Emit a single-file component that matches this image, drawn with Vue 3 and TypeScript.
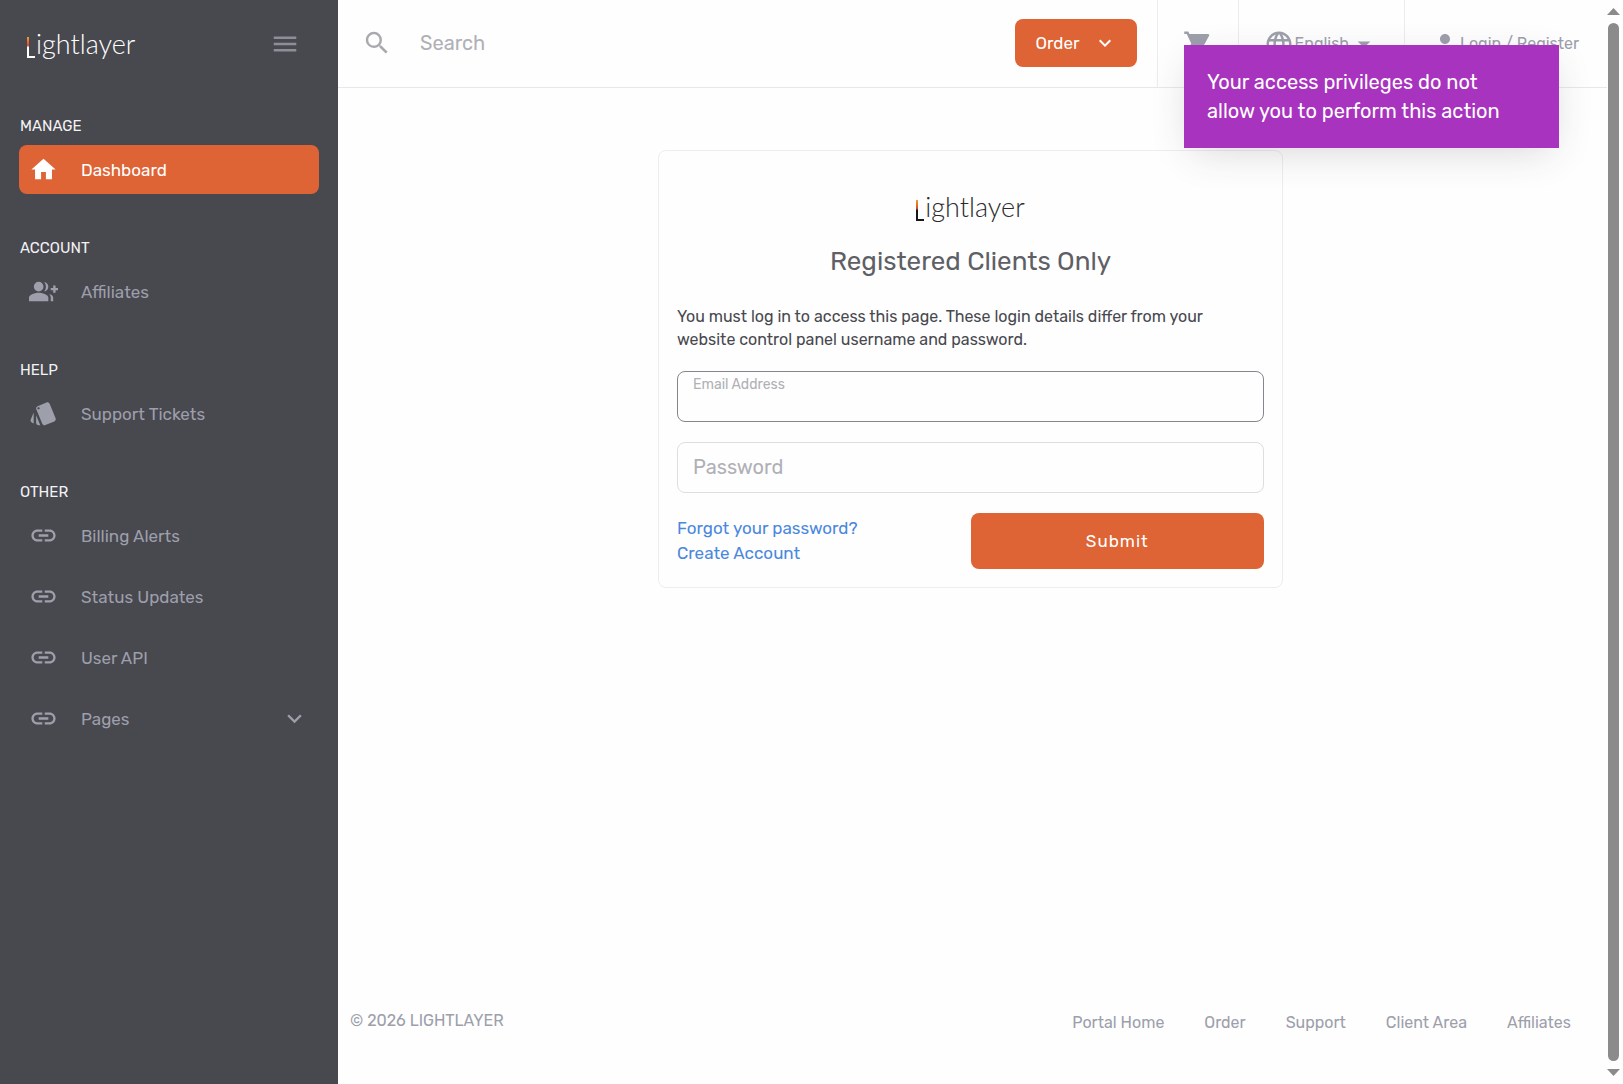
<script setup lang="ts">
import { ref } from 'vue'

interface NavItem {
  label: string
  icon: string
  active?: boolean
  expandable?: boolean
}

interface NavSection {
  title: string
  items: NavItem[]
}

const icons: Record<string, string> = {
  home: 'M10 20v-6h4v6h5v-8h3L12 3 2 12h3v8z',
  groupAdd:
    'M22 9V7h-2v2h-2v2h2v2h2v-2h2V9zM8 4a4 4 0 1 0 0 8 4 4 0 0 0 0-8zM8 13c-2.670 0-8 1.340-8 4v3h16v-3c0-2.660-5.330-4-8-4zM12.510 4.050C13.430 5.110 14 6.490 14 8s-.57 2.890-1.490 3.950C14.470 11.700 16 10.040 16 8s-1.530-3.700-3.490-3.950zM16.530 13.830C17.420 14.660 18 15.700 18 17v3h2v-3c0-1.450-1.590-2.510-3.470-3.170z',
  style:
    'M2.53 19.65l1.34.56v-9.03l-2.43 5.86c-.41 1.02.08 2.19 1.09 2.61zm19.5-3.7L17.07 3.98c-.31-.75-1.04-1.21-1.81-1.23-.26 0-.53.04-.79.15L7.1 5.95c-.75.31-1.21 1.03-1.23 1.8-.01.27.04.54.15.8l4.96 11.97c.31.76 1.05 1.22 1.83 1.23.26 0 .52-.05.77-.15l7.36-3.05c1.02-.42 1.51-1.59 1.09-2.6zM7.88 8.75c-.55 0-1-.45-1-1s.45-1 1-1 1 .45 1 1-.45 1-1 1zm-2 11c0 1.1.9 2 2 2h1.45l-3.45-8.34v6.34z',
  link: 'M3.900 12c0-1.710 1.390-3.100 3.100-3.100h4V7H7c-2.760 0-5 2.240-5 5s2.240 5 5 5h4v-1.900H7c-1.710 0-3.100-1.390-3.100-3.100zM8 13h8v-2H8v2zm9-6h-4v1.900h4c1.710 0 3.100 1.390 3.100 3.100s-1.390 3.100-3.100 3.100h-4V17h4c2.760 0 5-2.240 5-5s-2.240-5-5-5z',
}

const sections: NavSection[] = [
  { title: 'MANAGE', items: [{ label: 'Dashboard', icon: 'home', active: true }] },
  { title: 'ACCOUNT', items: [{ label: 'Affiliates', icon: 'groupAdd' }] },
  { title: 'HELP', items: [{ label: 'Support Tickets', icon: 'style' }] },
  {
    title: 'OTHER',
    items: [
      { label: 'Billing Alerts', icon: 'link' },
      { label: 'Status Updates', icon: 'link' },
      { label: 'User API', icon: 'link' },
      { label: 'Pages', icon: 'link', expandable: true },
    ],
  },
]

const footerLinks = ['Portal Home', 'Order', 'Support', 'Client Area', 'Affiliates']

const search = ref('')
const email = ref('')
const password = ref('')
</script>

<template>
  <div class="app">
    <aside class="sidebar">
      <header class="sidebar-head">
        <a href="#" class="logo logo-light" aria-label="Lightlayer"><i class="mark"></i><span>ightlayer</span></a>
        <button type="button" class="bare menu" aria-label="Toggle menu">
          <svg class="icon" viewBox="0 0 24 24"><path d="M3 18h18v-2H3v2zm0-5h18v-2H3v2zm0-7v2h18V6H3z" /></svg>
        </button>
      </header>
      <nav>
        <section v-for="section in sections" :key="section.title" class="nav-section">
          <h2>{{ section.title }}</h2>
          <a v-for="item in section.items" :key="item.label" href="#" class="nav-item" :class="{ active: item.active }">
            <svg class="nav-icon" viewBox="0 0 24 24"><path :d="icons[item.icon]" /></svg>
            <span>{{ item.label }}</span>
            <svg v-if="item.expandable" class="nav-icon expand" viewBox="0 0 24 24">
              <path d="M16.590 8.590 12 13.170 7.410 8.590 6 10l6 6 6-6z" />
            </svg>
          </a>
        </section>
      </nav>
    </aside>

    <div class="page">
      <header class="topbar">
        <label class="search">
          <svg class="icon" viewBox="0 0 24 24">
            <path d="M15.500 14h-.79l-.28-.27A6.470 6.470 0 0 0 16 9.500 6.500 6.500 0 1 0 9.500 16c1.610 0 3.090-.59 4.230-1.570l.27.28v.79l5 4.990L20.490 19l-4.990-5zm-6 0C7.010 14 5 11.990 5 9.500S7.010 5 9.500 5 14 7.010 14 9.500 11.990 14 9.500 14z" />
          </svg>
          <input v-model="search" type="text" placeholder="Search" aria-label="Search" />
        </label>
        <div class="order-wrap">
          <button type="button" class="order">
            <span>Order</span>
            <svg viewBox="0 0 24 24"><path d="M16.590 8.590 12 13.170 7.410 8.590 6 10l6 6 6-6z" /></svg>
          </button>
        </div>
        <a href="#" class="cell" aria-label="Cart">
          <svg class="icon" viewBox="0 0 24 24">
            <path d="M7 18c-1.100 0-1.990.9-1.990 2S5.900 22 7 22s2-.9 2-2-.9-2-2-2zM1 2v2h2l3.600 7.590-1.350 2.450c-.16.28-.25.61-.25.96 0 1.100.9 2 2 2h12v-2H7.420c-.14 0-.25-.11-.25-.25l.03-.12.9-1.630h7.450c.75 0 1.410-.41 1.750-1.030l3.580-6.490A1 1 0 0 0 20 4H5.210l-.94-2H1zm16 16c-1.100 0-1.990.9-1.990 2s.89 2 1.990 2 2-.9 2-2-.9-2-2-2z" />
          </svg>
        </a>
        <button type="button" class="bare cell">
          <svg class="icon" viewBox="0 0 24 24">
            <path d="M11.990 2C6.470 2 2 6.480 2 12s4.470 10 9.990 10C17.520 22 22 17.520 22 12S17.520 2 11.990 2zm6.930 6h-2.950a15.650 15.650 0 0 0-1.380-3.560A8.030 8.030 0 0 1 18.920 8zM12 4.040c.83 1.200 1.480 2.530 1.910 3.960h-3.820c.43-1.430 1.080-2.760 1.910-3.960zM4.260 14C4.100 13.360 4 12.690 4 12s.1-1.360.26-2h3.380c-.08.66-.14 1.320-.14 2s.06 1.340.14 2H4.260zm.82 2h2.950c.32 1.250.78 2.450 1.380 3.560A7.990 7.990 0 0 1 5.080 16zm2.950-8H5.080a7.990 7.990 0 0 1 4.330-3.560A15.650 15.650 0 0 0 8.030 8zM12 19.960c-.83-1.200-1.480-2.530-1.910-3.960h3.820c-.43 1.430-1.080 2.760-1.910 3.960zM14.340 14H9.660c-.09-.66-.16-1.320-.16-2s.07-1.350.16-2h4.680c.09.65.16 1.320.16 2s-.07 1.340-.16 2zm.25 5.560c.6-1.110 1.060-2.310 1.380-3.560h2.950a8.030 8.030 0 0 1-4.330 3.560zM16.360 14c.08-.66.14-1.320.14-2s-.06-1.340-.14-2h3.380c.16.64.26 1.310.26 2s-.1 1.360-.26 2h-3.380z" />
          </svg>
          <span>English</span>
          <svg class="icon" viewBox="0 0 24 24"><path d="M7 10l5 5 5-5z" /></svg>
        </button>
        <a href="#" class="cell">
          <svg class="icon" viewBox="0 0 24 24">
            <path d="M12 12c2.210 0 4-1.790 4-4s-1.790-4-4-4-4 1.790-4 4 1.790 4 4 4zm0 2c-2.670 0-8 1.340-8 4v2h16v-2c0-2.660-5.330-4-8-4z" />
          </svg>
          <span>Login / Register</span>
        </a>
      </header>

      <main>
        <form class="card" @submit.prevent>
          <a href="#" class="logo logo-dark" aria-label="Lightlayer"><i class="mark"></i><span>ightlayer</span></a>
          <h1>Registered Clients Only</h1>
          <p>You must log in to access this page. These login details differ from your website control panel username and password.</p>
          <div class="field focused">
            <label for="email">Email Address</label>
            <input id="email" v-model="email" type="email" />
          </div>
          <div class="field">
            <label for="password">Password</label>
            <input id="password" v-model="password" type="password" />
          </div>
          <div class="actions">
            <div class="links">
              <a href="#">Forgot your password?</a>
              <a href="#">Create Account</a>
            </div>
            <button type="submit" class="submit">Submit</button>
          </div>
        </form>
      </main>

      <footer class="footer">
        <span>© 2026 LIGHTLAYER</span>
        <nav>
          <a v-for="link in footerLinks" :key="link" href="#">{{ link }}</a>
        </nav>
      </footer>
    </div>

    <div class="scrollbar" aria-hidden="true">
      <i class="arrow up"></i>
      <i class="thumb"></i>
      <i class="arrow down"></i>
    </div>

    <div class="toast" role="alert">Your access privileges do not allow you to perform this action</div>
  </div>
</template>

<style>
body {
  margin: 0;
  background: #fefefe;
}
</style>

<style scoped>
* {
  box-sizing: border-box;
}

.app {
  position: relative;
  display: flex;
  min-height: 100vh;
  font-family: Rubik, Roboto, 'Liberation Sans', sans-serif;
  font-size: 16px;
  color: #9d9fab;
}

a {
  color: inherit;
  text-decoration: none;
}

svg {
  display: block;
  flex: none;
  fill: currentColor;
}

button,
input {
  font: inherit;
  color: inherit;
}

.bare {
  padding: 0;
  border: 0;
  background: none;
}

.icon {
  width: 30px;
  height: 30px;
}

.logo {
  display: flex;
  font-family: Lato, sans-serif;
  font-weight: 300;
  font-size: 27px;
  line-height: 32px;
}

.mark {
  width: 8px;
  height: 21px;
  margin: 9px 1px 0 0;
  background:
    linear-gradient(to bottom, #f0a032, #e0482e 40%, var(--ink) 50%) left / 2px 100% no-repeat,
    linear-gradient(var(--ink), var(--ink)) bottom / 100% 2px no-repeat;
}

.logo-light {
  --ink: #ffffff;
  color: #ffffff;
}

.logo-dark {
  --ink: #17171b;
  color: #2b2b2e;
}

.sidebar {
  flex: none;
  width: 338px;
  padding: 28px 19px;
  background: #48484f;
}

.sidebar-head {
  display: flex;
  justify-content: space-between;
  height: 56px;
  padding: 0 19px 0 8px;
}

.menu {
  height: 32px;
  color: #8e8e99;
}

.nav-section {
  padding-top: 32px;
}

h2 {
  margin: 0 0 9px 1px;
  font-size: 15px;
  font-weight: 400;
  line-height: 20px;
  color: #f3f3f5;
}

.nav-item {
  display: flex;
  align-items: center;
  height: 49px;
  margin-bottom: 12px;
  padding: 0 10px;
  border-radius: 8px;
  font-size: 17px;
}

.nav-item span {
  margin-left: 23px;
}

.nav-icon {
  width: 29px;
  height: 29px;
}

.expand {
  margin-left: auto;
}

.active {
  background: #de6335;
  color: #ffffff;
}

.page {
  display: flex;
  flex: 1;
  flex-direction: column;
  min-width: 0;
}

.topbar {
  display: flex;
  align-items: stretch;
  height: 88px;
  border-bottom: 1px solid #e8e8ea;
}

.topbar > * {
  display: flex;
  align-items: center;
  padding-bottom: 2px;
}

.search {
  flex: 1;
  gap: 28px;
  padding-left: 24px;
  color: #a9a9af;
}

.search input {
  flex: 1;
  padding: 0;
  border: 0;
  outline: 0;
  background: none;
  font-size: 20px;
}

.search input::placeholder {
  color: #b0b0b6;
}

.order-wrap {
  padding-right: 20px;
}

.order {
  display: flex;
  align-items: center;
  justify-content: space-between;
  width: 122px;
  height: 48px;
  padding: 0 20px;
  border: 0;
  border-radius: 8px;
  background: #de6335;
  color: #ffffff;
  font-size: 17px;
}

.order svg {
  width: 24px;
  height: 24px;
}

.cell {
  padding: 0 25px;
  border-left: 1px solid #ececef;
}

.cell:last-child {
  padding-right: 28px;
}

main {
  display: flex;
  flex: 1;
  align-items: flex-start;
  justify-content: center;
  padding: 62px 28px 62px 24px;
}

.card {
  display: flex;
  flex-direction: column;
  width: 100%;
  max-width: 625px;
  padding: 40px 18px 18px;
  border: 1px solid #ededf0;
  border-radius: 8px;
}

.logo-dark {
  align-self: center;
}

h1 {
  margin: 21px 0 25px;
  font-size: 26px;
  font-weight: 400;
  line-height: 36px;
  text-align: center;
  color: #5f5f66;
}

p {
  margin: 0 0 20px;
  line-height: 23px;
  color: #48484f;
}

.field {
  position: relative;
  margin-bottom: 20px;
}

.field input {
  display: block;
  width: 100%;
  height: 51px;
  padding: 12px 15px 0;
  border: 1px solid #dedee1;
  border-radius: 8px;
  outline: 0;
  background: none;
}

.field label {
  position: absolute;
  top: 0;
  left: 16px;
  font-size: 20px;
  line-height: 51px;
  color: #b0b0b6;
}

.focused input {
  border-color: #85858b;
}

.focused label {
  font-size: 14px;
  line-height: 28px;
}

.actions {
  display: flex;
  font-size: 17px;
}

.actions > * {
  flex: 1;
}

.links {
  display: flex;
  flex-direction: column;
  padding-top: 3px;
  line-height: 25px;
  color: #4a88dd;
}

.submit {
  height: 56px;
  padding: 0;
  border: 0;
  border-radius: 8px;
  background: #de6335;
  color: #ffffff;
  letter-spacing: 1px;
}

.footer {
  display: flex;
  align-items: flex-start;
  justify-content: space-between;
  padding: 0 36px 49px 12px;
  line-height: 24px;
}

.footer nav {
  display: flex;
  gap: 40px;
  padding-top: 2px;
}

.scrollbar {
  display: flex;
  flex: none;
  flex-direction: column;
  align-items: center;
  gap: 8px;
  width: 16px;
  padding: 8px 3px 8px 0;
}

.thumb {
  flex: 1;
  width: 11px;
  border-radius: 6px;
  background: #8b8b8b;
}

.arrow {
  width: 13px;
  height: 7px;
  background: #8b8b8b;
}

.up {
  clip-path: polygon(50% 0, 100% 100%, 0 100%);
}

.down {
  clip-path: polygon(0 0, 100% 0, 50% 100%);
}

.toast {
  position: absolute;
  top: 45px;
  right: 64px;
  width: 375px;
  padding: 23px 48px 22px 23px;
  background: #a833be;
  color: #ffffff;
  font-size: 20px;
  line-height: 29px;
  box-shadow: 0 10px 40px -8px rgba(60, 50, 60, 0.2);
}
</style>
